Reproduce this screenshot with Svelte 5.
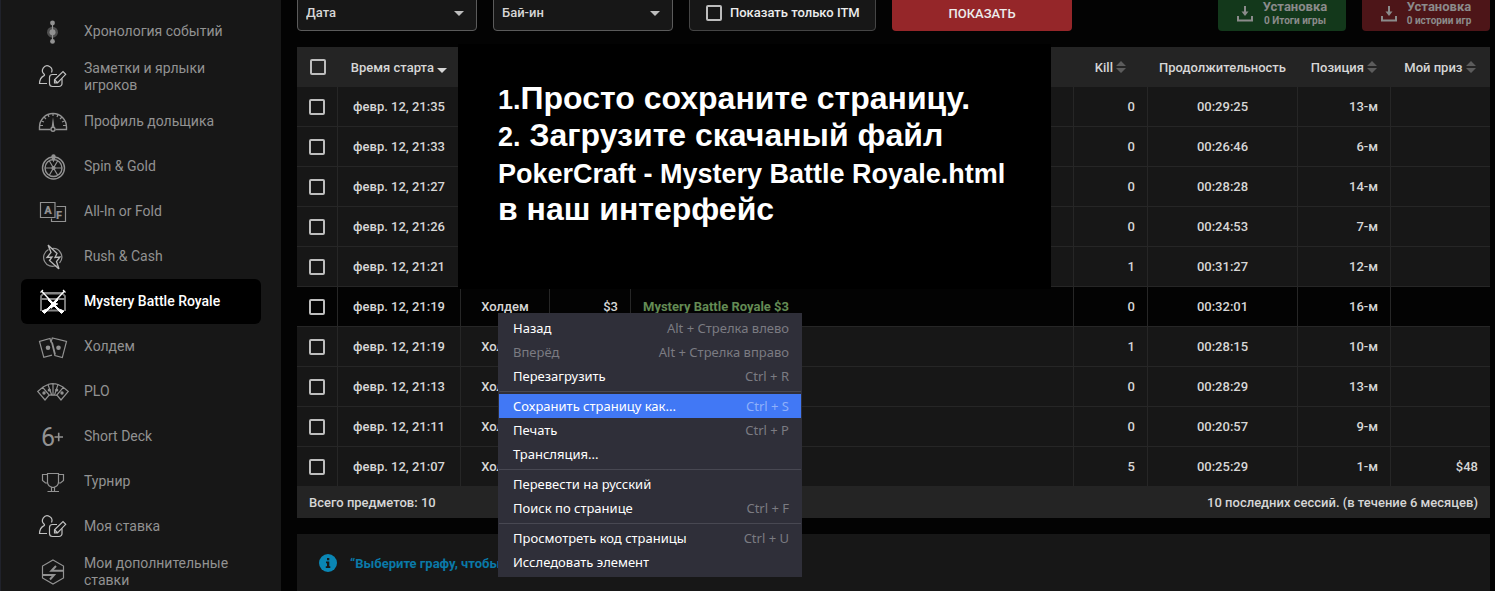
<script lang="ts">
  const nav = [
    { icon: 'timeline', label: 'Хронология событий' },
    { icon: 'notes', label: 'Заметки и ярлыки игроков' },
    { icon: 'gauge', label: 'Профиль дольщика' },
    { icon: 'wheel', label: 'Spin & Gold' },
    { icon: 'af', label: 'All-In or Fold' },
    { icon: 'rush', label: 'Rush & Cash' },
    { icon: 'mystery', label: 'Mystery Battle Royale', active: true },
    { icon: 'holdem', label: 'Холдем' },
    { icon: 'plo', label: 'PLO' },
    { icon: 'six', label: 'Short Deck' },
    { icon: 'cup', label: 'Турнир' },
    { icon: 'notes', label: 'Моя ставка' },
    { icon: 'hex', label: 'Мои дополнительные ставки' }
  ];

  const rows = [
    { time: '21:35', kill: 0, duration: '00:29:25', place: '13-м' },
    { time: '21:33', kill: 0, duration: '00:26:46', place: '6-м' },
    { time: '21:27', kill: 0, duration: '00:28:28', place: '14-м' },
    { time: '21:26', kill: 0, duration: '00:24:53', place: '7-м' },
    { time: '21:21', kill: 1, duration: '00:31:27', place: '12-м' },
    { time: '21:19', game: 'Холдем', buyin: '$3', title: 'Mystery Battle Royale $3', kill: 0, duration: '00:32:01', place: '16-м', current: true },
    { time: '21:19', game: 'Холдем', kill: 1, duration: '00:28:15', place: '10-м' },
    { time: '21:13', game: 'Холдем', kill: 0, duration: '00:28:29', place: '13-м' },
    { time: '21:11', game: 'Холдем', kill: 0, duration: '00:20:57', place: '9-м' },
    { time: '21:07', game: 'Холдем', kill: 5, duration: '00:25:29', place: '1-м', prize: '$48' }
  ];

  const menu = [
    [
      { label: 'Назад', keys: 'Alt + Стрелка влево' },
      { label: 'Вперёд', keys: 'Alt + Стрелка вправо', disabled: true },
      { label: 'Перезагрузить', keys: 'Ctrl + R' }
    ],
    [
      { label: 'Сохранить страницу как...', keys: 'Ctrl + S', active: true },
      { label: 'Печать', keys: 'Ctrl + P' },
      { label: 'Трансляция...' }
    ],
    [
      { label: 'Перевести на русский' },
      { label: 'Поиск по странице', keys: 'Ctrl + F' }
    ],
    [
      { label: 'Просмотреть код страницы', keys: 'Ctrl + U' },
      { label: 'Исследовать элемент' }
    ]
  ];
</script>

{#snippet icon(name: string)}
  <svg class="icon" viewBox="0 0 32 28" width="32" height="28" fill="none" stroke="currentColor" stroke-width="1.2" aria-hidden="true">
    {#if name === 'timeline'}
      <circle cx="15.5" cy="14.2" r="5.5" fill="currentColor" stroke="none" opacity=".45" />
      <path d="M15.500 5v19" />
      <g fill="currentColor" stroke="none">
        <circle cx="15.5" cy="14.2" r="3" /><circle cx="15.5" cy="5" r="2.4" /><circle cx="15.5" cy="23.4" r="2.4" />
      </g>
    {:else if name === 'notes'}
      <g stroke="#c0c0c0" stroke-width="1.2">
        <path d="M10 20.500H2.500c.2-4.500 2-6.500 4.200-7.600 1-.5 1-1 .5-1.700A4.700 4.700 0 1 1 14.500 9.500" />
        <path d="M20 11.500h-4.500a3 3 0 0 0-3 3v6a3 3 0 0 0 3 3H22a3 3 0 0 0 3-3v-5" />
        <path d="M17.500 19.800v-3l8.500-8.300 2.700 2.800-8.200 8.500zM17.800 17l2.500 2.500" />
      </g>
    {:else if name === 'gauge'}
      <path d="M13.500 21.500h-11V19a13.500 13.500 0 0 1 27 0v2.500h-11" stroke-width="1.400" />
      <path d="M3 17.500h3M26 17.500h3M4.500 13l2.500 1M27.500 13L25 14M7 9l2 2M25 9l-2 2M11 6.500l1 2.500M21 6.500L20 9M16 5.500v2.500" />
      <path d="M14.500 20L16 9l1.500 11z" fill="currentColor" stroke="none" />
      <circle cx="16" cy="21.300" r="2" fill="#171717" stroke-width="1.400" />
    {:else if name === 'wheel'}
      <circle cx="16.500" cy="15" r="11" stroke-width="1.400" /><circle cx="16.500" cy="15" r="8.500" stroke-width="1.400" />
      <path d="M8 15h17M12.300 7.700l8.400 14.600M20.700 7.700l-8.400 14.600" />
      <circle cx="16.500" cy="15" r="1.500" fill="currentColor" />
      <path d="M14.300 3.500a2.200 2.200 0 0 1 4.400 0c0 1.500-1 3-2.200 6-1.200-3-2.200-4.500-2.200-6z" fill="currentColor" stroke="none" />
    {:else if name === 'af'}
      <path d="M3.500 4.500H18v15H3.500zM19.500 8.500h9v15h-14v-3" />
      <text x="11" y="16" class="glyph">A</text><text x="22" y="20.500" class="glyph">F</text>
    {:else if name === 'rush'}
      <path d="M11.500 6.500a8.700 8.700 0 0 0 8 15.800M15 5.500a8.700 8.700 0 0 1 7.500 14.500" />
      <path d="M11 2l9 8.500-2 4 5-.5-3.500 4.500 2.500 7.500M22 26l-9.500-8.500 2.500-3.500-5 .5 4-5L11 2" stroke="#b8b8b8" stroke-width="1.300" />
    {:else if name === 'mystery'}
      <path d="M4 23V8l3-3h18l3 3v15M4 11h24M8 5.500h16M7 22.500h18" stroke="#858585" stroke-width="1.800" />
      <g stroke="#fff" fill="#fff">
        <path d="M4.500 3l14 15M27.500 3l-14 15" stroke-width="1.400" />
        <path d="M3.500 4.500L6 2M28.500 4.500L26 2" stroke-width="1.200" />
        <path d="M12 11l10 10 5 2-2.500 2.500L11 12zM20 11L10 21l-5 2 2.500 2.500L21 12z" stroke-width="1" />
        <path d="M14 20.500l1-3 2 .5 1-2.500 3 .5" stroke-width="1.200" />
      </g>
    {:else if name === 'holdem'}
      <path d="M14 9.500l-1-4L2.500 8.300l4.300 16 8.200-2.200M15.300 5l-1 3 3.600 14.600 7.400 2 4.200-16.200zM15.300 9.500l3 12" />
      <circle cx="11" cy="14.700" r="2.300" fill="currentColor" stroke="none" /><circle cx="21.500" cy="14.700" r="2.300" fill="currentColor" stroke="none" />
    {:else if name === 'plo'}
      <path d="M.700 13.500l5-4.200 6.500 7.700-4.200 5zM5.500 9.200l5.500-2.700 3.500 10-2.500 1M11 6.500q2.500-.800 5-.800v11.500h-2.500M16 5.700q2.500 0 5 .800l-3.500 10.700H16M21 6.500l5.500 2.700M31.300 13.500l-5-4.200-6.500 7.700 4.200 5zM17.500 17l2.500.500" />
      <g fill="currentColor" stroke="none"><circle cx="7" cy="15" r="1.700" /><circle cx="12.300" cy="12" r="1.600" /><circle cx="19.700" cy="12" r="1.600" /><circle cx="25" cy="15" r="1.700" /></g>
    {:else if name === 'six'}
      <text x="4" y="23" class="six">6</text>
      <path d="M17.500 14H26M21.700 9.700v8.600" stroke-width="1.600" />
    {:else if name === 'cup'}
      <path d="M10.500 5.500h11v8.500q0 4.500-5.500 5.500-5.500-1-5.500-5.500zM10.500 6.500h-5v6l3 2.500h2.500M21.500 6.500h5v6l-3 2.500H21M14.500 19.500v4M17.500 19.500v4M10.500 23.500h11.500" />
    {:else if name === 'hex'}
      <path d="M16 2l10.500 6v12L16 26 5.500 20V8z" />
      <path d="M5.500 17H17l-4 4.500M26.500 12.700H14.500L19 8" stroke-width="2" />
    {/if}
  </svg>
{/snippet}

{#snippet sorter()}
  <svg class="sorter" viewBox="0 0 10 12" width="10" height="12" fill="currentColor" aria-hidden="true">
    <path d="M5 0l5 5H0zM0 7h10l-5 5z" />
  </svg>
{/snippet}

{#snippet download()}
  <svg width="16" height="16" viewBox="0 0 16 16" fill="none" stroke="currentColor" stroke-width="2" aria-hidden="true">
    <path d="M1 10v4.500h14V10M8 0v6" /><path d="M4.500 5.500h7L8 10z" fill="currentColor" stroke="none" />
  </svg>
{/snippet}

<div class="page">
  <nav class="sidebar">
    {#each nav as item}
      <a href="#top" class="nav-item" class:active={item.active}>
        {@render icon(item.icon)}
        <span>{item.label}</span>
      </a>
    {/each}
  </nav>

  <main>
    <div class="filters">
      <select class="field" aria-label="Дата"><option>Дата</option></select>
      <select class="field" aria-label="Бай-ин"><option>Бай-ин</option></select>
      <label class="itm"><input type="checkbox" /> Показать только ITM</label>
      <button class="show">ПОКАЗАТЬ</button>
      <div class="downloads">
        <button class="download green">{@render download()}<span><b>Установка</b><small>0 Итоги игры</small></span></button>
        <button class="download red">{@render download()}<span><b>Установка</b><small>0 истории игр</small></span></button>
      </div>
    </div>

    <section class="results">
      <table>
        <colgroup>
          <col class="c-check" /><col class="c-time" /><col class="c-game" /><col class="c-buyin" /><col />
          <col class="c-kill" /><col class="c-duration" /><col class="c-place" /><col class="c-prize" />
        </colgroup>
        <thead>
          <tr>
            <th class="check"><input type="checkbox" aria-label="Все" /></th>
            <th>Время старта <svg class="down" width="10" height="5" viewBox="0 0 10 5" fill="currentColor" aria-hidden="true"><path d="M0 0h10L5 5z" /></svg></th>
            <th></th><th></th><th></th>
            <th>Kill {@render sorter()}</th>
            <th>Продолжительность</th>
            <th>Позиция {@render sorter()}</th>
            <th>Мой приз {@render sorter()}</th>
          </tr>
        </thead>
        <tbody>
          {#each rows as row}
            <tr class:current={row.current}>
              <td><input type="checkbox" aria-label={row.time} /></td>
              <td>февр. 12, {row.time}</td>
              <td>{row.game ?? ''}</td>
              <td class="end">{row.buyin ?? ''}</td>
              <td class="title">{row.title ?? ''}</td>
              <td class="end">{row.kill}</td>
              <td>{row.duration}</td>
              <td class="end">{row.place}</td>
              <td class="end">{row.prize ?? ''}</td>
            </tr>
          {/each}
        </tbody>
      </table>
      <footer><span>Всего предметов: 10</span><span>10 последних сессий. (в течение 6 месяцев)</span></footer>
    </section>

    <section class="hint">
      <svg width="18" height="18" viewBox="0 0 18 18" aria-hidden="true">
        <circle cx="9" cy="9" r="9" fill="#0a86b4" />
        <path d="M8 4h2.300v2.200H8zM7 7.500h3.300v4.800h1V14H6.800v-1.700H8V9.200H7z" fill="#171717" />
      </svg>
      <span>“Выберите графу, чтобы</span>
    </section>
  </main>

  <div class="guide">
    <p><small>1.</small>Просто сохраните страницу.</p>
    <p><small>2.</small> Загрузите скачаный файл</p>
    <p><small>PokerCraft - Mystery Battle Royale.html</small></p>
    <p>в наш интерфейс</p>
  </div>

  <div class="menu" role="menu">
    {#each menu as group}
      <div class="group">
        {#each group as item}
          <button role="menuitem" class:active={item.active} disabled={item.disabled}>
            <span>{item.label}</span><kbd>{item.keys ?? ''}</kbd>
          </button>
        {/each}
      </div>
    {/each}
  </div>
</div>

<style>
  :global(body) {
    background: #030303;
  }
  * {
    box-sizing: border-box;
  }
  .page {
    position: relative;
    display: flex;
    height: 100vh;
    overflow: hidden;
    background: #030303;
    color: #d6d6d6;
    font: 500 13px/16px Roboto, sans-serif;
  }
  button,
  select {
    font: inherit;
    color: inherit;
  }

  .sidebar {
    flex: none;
    width: 281px;
    padding: 9px 20px 0;
    border-left: 1px solid #20222b;
    background: #171717;
  }
  .nav-item {
    display: flex;
    align-items: center;
    gap: 15px;
    height: 45px;
    padding: 0 24px 0 16px;
    border-radius: 6px;
    color: #929292;
    font-size: 14px;
    font-weight: 400;
    line-height: 17px;
    text-decoration: none;
  }
  .nav-item.active {
    background: #000;
    color: #fff;
    font-weight: 500;
  }
  .icon {
    flex: none;
  }
  .glyph {
    font: 900 11px Roboto, sans-serif;
    fill: currentColor;
    stroke: none;
    text-anchor: middle;
  }
  .six {
    font: 400 25px Roboto, sans-serif;
    fill: currentColor;
    stroke: none;
  }

  main {
    flex: 1;
    min-width: 0;
    margin-top: -5px;
    padding: 0 5px 0 16px;
  }
  .filters {
    display: flex;
    gap: 16px;
    height: 36px;
    margin-bottom: 16px;
  }
  .field {
    appearance: none;
    width: 180px;
    padding: 0 8px;
    border: 1px solid #5b5b5b;
    border-radius: 4px;
    background: #171717
      url("data:image/svg+xml,%3Csvg xmlns='http://www.w3.org/2000/svg' width='10' height='5'%3E%3Cpath d='M0 0h10L5 5z' fill='%23bdbdbd'/%3E%3C/svg%3E")
      no-repeat right 12px center;
    color: #d6d6d6;
  }
  .itm {
    display: flex;
    align-items: center;
    gap: 8px;
    width: 187px;
    padding: 0 16px;
    border: 1px solid #454545;
    border-radius: 4px;
    background: #171717;
    color: #ececec;
    white-space: nowrap;
  }
  input[type="checkbox"] {
    appearance: none;
    flex: none;
    width: 16px;
    height: 16px;
    margin: 0;
    border: 2px solid #bdbdbd;
    border-radius: 2px;
    vertical-align: middle;
  }
  .show {
    width: 180px;
    padding: 2px 0 0;
    border: 0;
    border-radius: 4px;
    background: #952629;
    color: #ececec;
  }
  .downloads {
    display: flex;
    gap: 16px;
    margin-left: auto;
  }
  .download {
    display: flex;
    align-items: center;
    justify-content: center;
    gap: 10px;
    width: 128px;
    padding: 2px 0 0;
    border: 0;
    border-radius: 4px;
    color: #8b8b8b;
  }
  .download span {
    display: flex;
    flex-direction: column;
    align-items: center;
    line-height: 14px;
  }
  .download b {
    font-weight: 700;
  }
  .download small {
    font-size: 10px;
    font-weight: 700;
    line-height: 14px;
  }
  .green {
    background: #13381b;
  }
  .red {
    background: #4d1518;
  }

  table {
    width: 100%;
    table-layout: fixed;
    border-collapse: separate;
    border-spacing: 0;
    background: #171717;
  }
  .c-check { width: 41px; }
  .c-time { width: 123px; }
  .c-game { width: 89px; }
  .c-buyin { width: 81px; }
  .c-kill { width: 74px; }
  .c-duration { width: 150px; }
  .c-place { width: 93px; }
  .c-prize { width: 99px; }
  th,
  td {
    height: 40px;
    padding: 0;
    text-align: center;
    white-space: nowrap;
  }
  th {
    padding: 2px 1px 0 0;
    background: #242424;
    font-weight: 500;
  }
  th.check {
    padding: 0;
  }
  td {
    border: 0 solid #262626;
    border-width: 0 1px 1px 0;
  }
  td:last-child {
    border-right: 0;
  }
  tbody tr:last-child td {
    height: 39px;
    border-bottom: 0;
  }
  .current {
    background: #030303;
  }
  td.end {
    padding-right: 12px;
    text-align: right;
  }
  .title {
    padding-left: 12px;
    color: #638b54;
    font-weight: 700;
    text-align: left;
  }
  .sorter {
    color: #5c5c5c;
    vertical-align: -1px;
  }
  .down {
    vertical-align: -1px;
  }
  footer {
    display: flex;
    align-items: center;
    justify-content: space-between;
    height: 32px;
    padding: 2px 12px 0;
    background: #242424;
  }

  .hint {
    display: flex;
    align-items: flex-start;
    gap: 13px;
    height: 80px;
    margin-top: 16px;
    padding: 20px 22px;
    background: #171717;
    color: #0a79a8;
    font-weight: 700;
    line-height: 20px;
  }

  .guide {
    position: absolute;
    left: 458px;
    top: 44px;
    width: 593px;
    height: 245px;
    padding: 36px 40px;
    background: #000;
    color: #fff;
    font: bold 32px/37px "Liberation Sans", Arial, sans-serif;
    white-space: nowrap;
  }
  .guide p {
    margin: 0;
  }
  .guide small {
    font-size: 27px;
    line-height: 1;
  }

  .menu {
    position: absolute;
    left: 498px;
    top: 313px;
    width: 304px;
    padding: 3px 1px;
    background: #2f2f39;
    color: #fff;
    font: 13px/24px "Noto Sans", sans-serif;
  }
  .group + .group {
    margin-top: 3px;
    padding-top: 2px;
    border-top: 1px solid #484852;
  }
  .menu button {
    display: flex;
    justify-content: space-between;
    width: 100%;
    height: 24px;
    padding: 0 12px 0 14px;
    border: 0;
    background: none;
    text-align: left;
  }
  .menu button:disabled,
  kbd {
    color: #7b7b82;
  }
  kbd {
    font: inherit;
  }
  .menu .active {
    background: #4178f5;
  }
  .active kbd {
    color: #8fb0fa;
  }
</style>
